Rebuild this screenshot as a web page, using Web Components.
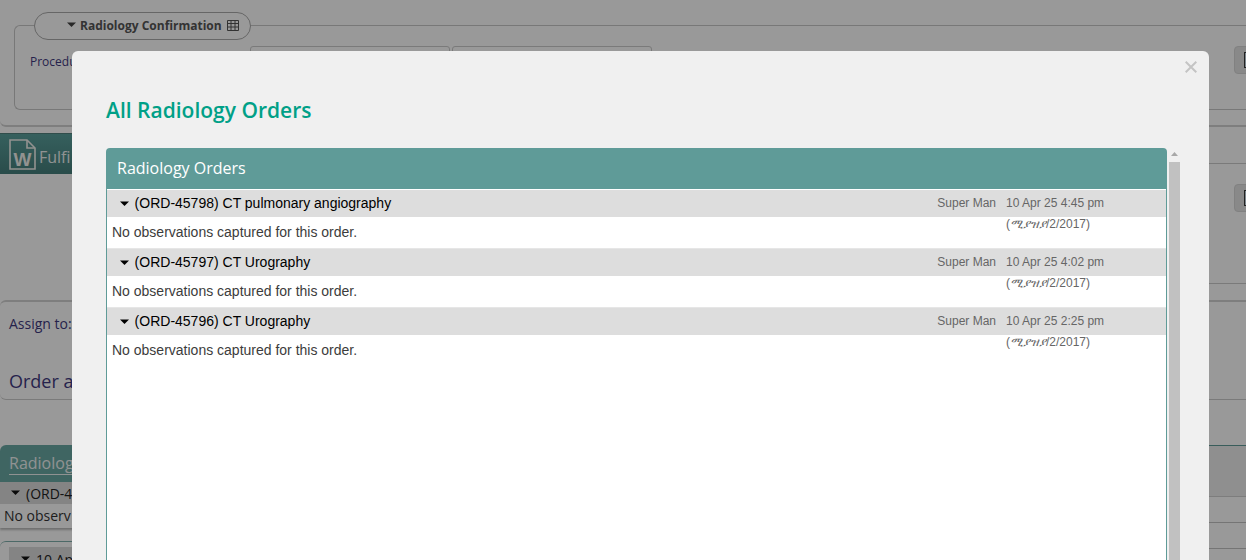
<!DOCTYPE html>
<html lang="en">
<head>
<meta charset="utf-8">
<title>All Radiology Orders</title>
<style>
  html, body { margin: 0; height: 560px; overflow: hidden; background: #fff; }
  body { font-family: "Open Sans", sans-serif; }
</style>
</head>
<body>
<form-background></form-background>
<orders-modal heading="All Radiology Orders" panel-title="Radiology Orders">
  <order-row code="(ORD-45798) CT pulmonary angiography" by="Super Man" date="10 Apr 25 4:45 pm" month="ሚያዝያ" rest="/2/2017)"></order-row>
  <order-row code="(ORD-45797) CT Urography" by="Super Man" date="10 Apr 25 4:02 pm" month="ሚያዝያ" rest="/2/2017)"></order-row>
  <order-row code="(ORD-45796) CT Urography" by="Super Man" date="10 Apr 25 2:25 pm" month="ሚያዝያ" rest="/2/2017)"></order-row>
</orders-modal>

<script>
// small helper, every element below sets its own shadow markup
const caret = (size, color) =>
  `<svg width="${size}" height="${size / 2 + 1}" viewBox="0 0 10 6" style="display:block"><path d="M0 .5h10L5 5.5z" fill="${color}"/></svg>`;

// The dimmed form lying behind the modal
class FormBackground extends HTMLElement {
  constructor() {
    super();
    this.attachShadow({ mode: 'open' });
  }

  connectedCallback() {
    this.shadowRoot.innerHTML = `
      <style>
        :host { display: block; width: 1246px; color: #3f3a80; font: 13px "Open Sans", sans-serif; }
        .confirm { box-sizing: border-box; height: 127px; padding: 25px 0 0 14px;
          border-bottom: 2px solid #d2d2d2; border-radius: 0 0 0 6px; }
        .fieldset { height: 85px; box-sizing: border-box; border: 1px solid #c8c8c8; border-right: 0; border-radius: 6px 0 0 6px; }
        .legend { display: flex; align-items: center; gap: 5px; box-sizing: border-box; width: 217px; height: 28px;
          margin: -14px 0 0 19px; padding: 0 0 2px 32px; background: #fff; border: 1px solid #aaa; border-radius: 14px;
          font-size: 12px; }
        .legend b { font-weight: 700; color: #555; margin-left: -1px; }
        .fields { display: flex; margin-top: 6px; }
        .label { width: 220px; margin-left: 15px; padding-top: 7px; font-size: 12px; line-height: 17px; }
        .input { width: 198px; height: 26px; margin-right: 2px; border: 1px solid #ccc; border-radius: 3px; }
        .tool { flex: none; box-sizing: border-box; width: 28px; height: 28px; display: flex; align-items: center; padding-left: 9px;
          background: #e4e4e4; border: 1px solid #d8d8d8; border-radius: 4px; }
        .tool i { display: block; width: 12px; height: 14px; border: 1.5px solid #3b3b3b; background: #cfe0ea; }
        .fields .tool { margin-left: auto; margin-right: -16px; }
        .fulfil { display: flex; height: 173px; }
        .left { flex: none; width: 300px; padding-top: 6px; }
        .band { display: flex; align-items: center; gap: 3px; box-sizing: border-box; height: 41px; padding-left: 9px;
          color: #f0f4f4; font-size: 16px; background: linear-gradient(#5aa09c, #467f7c); border-top: 1px solid #50807e; }
        .band span { padding-top: 6px; }
        .right { flex: 1; min-width: 0; }
        .strip { height: 36px; border-bottom: 1px solid #ccc; }
        .tools { display: flex; justify-content: flex-end; height: 99px; padding-top: 20px; border-bottom: 1px solid #ccc; }
        .tools .tool { margin-right: -16px; }
        .assign { box-sizing: border-box; height: 100px; padding: 12px 9px 0; border-top: 2px solid #d2d2d2; border-bottom: 1px solid #ccc; border-radius: 6px 0 0 6px; }
        .assign p { margin: 0; font-size: 14px; line-height: 20px; }
        .assign h3 { margin: 35px 0 0; font-size: 18px; line-height: 24px; font-weight: 400; }
        .orders { display: flex; margin-top: 45px; }
        .orders .left { padding-top: 0; }
        .orders .head { box-sizing: border-box; height: 37px; padding: 7px 0 0 9px; background: #6aa8a4; border-radius: 6px 0 0 0; }
        .orders .head u { color: #f0f4f4; font-size: 16px; line-height: 22px; text-underline-offset: 5px; }
        .row { display: flex; align-items: center; gap: 6px; box-sizing: border-box; height: 22px; padding-left: 11px; color: #222; font-size: 14px; background: #ddd; }
        .note { height: 24px; padding-left: 4px; line-height: 24px; color: #333; font-size: 14px; box-shadow: 0 2px 2px #bbb; }
        .sub { margin-top: 13px; padding: 5px 0 0 9px; border-top: 1px solid #7fb0ac; border-radius: 6px 0 0 0; }
        .sub .row { padding-left: 12px; height: 24px; }
        .table { flex: 1; min-width: 0; }
        .table div { border-bottom: 1px solid #c4c4c4; height: 25px; }
        .table .top { height: 50px; background: #eee; border-top: 1px solid #5f9b98; border-bottom-color: #d0d0d0; }
      </style>
      <section class="confirm">
        <div class="fieldset">
          <div class="legend">
            ${caret(9, '#444')}
            <b>Radiology Confirmation</b>
            <svg width="12" height="11" viewBox="0 0 12 11" fill="none" stroke="#555"><path d="M.5.5h11v10H.5zM.5 3.5h11M.5 7h11M4 .5v10M8 .5v10"/></svg>
          </div>
          <div class="fields">
            <div class="label">Procedu</div>
            <div class="input"></div>
            <div class="input"></div>
            <div class="tool"><i></i></div>
          </div>
        </div>
      </section>
      <section class="fulfil">
        <div class="left">
          <div class="band">
            <svg width="27" height="31" viewBox="0 0 27 31" fill="none" stroke="#f4f4f0" stroke-width="1.6">
              <path d="M1 1h17l8 8v21H1z"/><path d="M18 1v8h8"/>
              <text x="13.5" y="27" text-anchor="middle" fill="#f4f4f0" stroke="none" font-family="Liberation Sans, sans-serif" font-weight="700" font-size="19">W</text>
            </svg>
            <span>Fulfi</span>
          </div>
        </div>
        <div class="right">
          <div class="strip"></div>
          <div class="tools"><div class="tool"><i></i></div></div>
        </div>
      </section>
      <section class="assign">
        <p>Assign to:</p>
        <h3>Order a</h3>
      </section>
      <section class="orders">
        <div class="left">
          <div class="head"><u>Radiolog</u></div>
          <div class="row">${caret(9, '#111')}<span>(ORD-4</span></div>
          <div class="note">No observ</div>
          <div class="sub"><div class="row">${caret(9, '#111')}<span>10 Ap</span></div></div>
        </div>
        <div class="table"><div class="top"></div><div></div><div></div></div>
      </section>
    `;
  }
}

// One order: grey title bar, with the observations below it
class OrderRow extends HTMLElement {
  constructor() {
    super();
    this.attachShadow({ mode: 'open' });
  }

  connectedCallback() {
    const attr = name => this.getAttribute(name) || '';
    this.shadowRoot.innerHTML = `
      <style>
        :host { display: block; font-family: "Liberation Sans", Arial, sans-serif; border-bottom: 1px solid #e6e6e6; }
        :host(:last-child) { border-bottom: 0; }
        .bar { display: flex; height: 27px; background: #ddd; color: #000; font-size: 14px; line-height: 27px; }
        .caret { width: 28px; display: flex; justify-content: center; align-items: center; margin-left: 3px; flex: none; margin-right: -3.4px; }
        .code { flex: 1; }
        .by, .when { color: #666; font-size: 12px; line-height: 27px; }
        .by { margin-right: 10px; }
        .when { width: 160px; flex: none; }
        .when div + div { line-height: 14px; }
        .month { font-style: italic; }
        .note { height: 31px; padding-left: 5px; color: #3c3c3c; font-size: 14px; line-height: 30px; }
      </style>
      <div class="bar">
        <span class="caret">${caret(9, '#000')}</span>
        <span class="code">${attr('code')}</span>
        <span class="by">${attr('by')}</span>
        <span class="when">
          <div>${attr('date')}</div>
          <div>(<span class="month" lang="am">${attr('month')}</span>${attr('rest')}</div>
        </span>
      </div>
      <div class="note">No observations captured for this order.</div>
    `;
  }
}

class OrdersModal extends HTMLElement {
  constructor() {
    super();
    this.attachShadow({ mode: 'open' });
  }

  connectedCallback() {
    this.shadowRoot.innerHTML = `
      <style>
        :host { display: block; position: fixed; inset: 0; background: rgba(0, 0, 0, .4); overflow: hidden; }
        .dialog { position: absolute; left: 72px; top: 51px; width: 1137px; height: 620px; box-sizing: border-box;
          padding: 45px 29px 0 34px; background: #f0f0f0; border-radius: 6px 6px 0 0; }
        .close { position: absolute; left: 1113px; top: 10px; display: block; }
        h2 { margin: 0 0 23px; color: #00a087; font-size: 21px; line-height: 29px; font-weight: 600; }
        .scroller { display: flex; gap: 2px; }
        .panel { flex: 1; min-width: 0; }
        .title { box-sizing: border-box; height: 41px; padding: 9px 11px; background: #5f9b98; color: #fff; font-size: 16px; line-height: 22px; border-radius: 4px 4px 0 0; }
        .body { height: 500px; background: #fff; border: 1px solid #5f9b98; border-top: 0; padding-top: 1px; }
        .bar { flex: none; width: 11px; }
        .up { display: flex; justify-content: center; height: 14px; padding-top: 4px; box-sizing: border-box; }
        .thumb { height: 500px; background: #c1c1c1; }
      </style>
      <div class="dialog" role="dialog">
        <svg class="close" width="12" height="12" viewBox="0 0 12 12" stroke="#c4c4c4" stroke-width="2"><path d="M.7.7l10.6 10.6M11.3.7L.7 11.3"/></svg>
        <h2>${this.getAttribute('heading')}</h2>
        <div class="scroller">
          <div class="panel">
            <div class="title">${this.getAttribute('panel-title')}</div>
            <div class="body"><slot></slot></div>
          </div>
          <div class="bar">
            <div class="up"><svg width="7" height="4" viewBox="0 0 7 4"><path d="M3.5 0L7 4H0z" fill="#a8a8a8"/></svg></div>
            <div class="thumb"></div>
          </div>
        </div>
      </div>
    `;
  }
}

customElements.define('form-background', FormBackground);
customElements.define('order-row', OrderRow);
customElements.define('orders-modal', OrdersModal);
</script>
</body>
</html>
